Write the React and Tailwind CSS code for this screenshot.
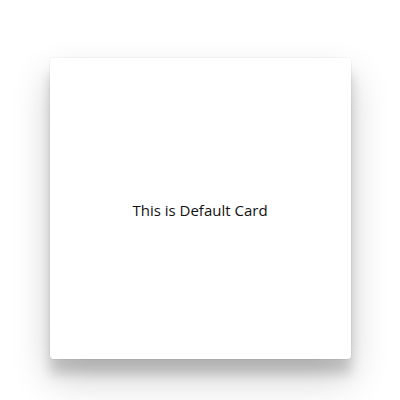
export default function App() {
  return (
    <div className="flex h-[400px] w-[400px] justify-center bg-white pt-[58px]" style={{ fontFamily: '"Open Sans", sans-serif' }}>
      <div className="flex h-[301px] w-[301px] items-center justify-center rounded-[4px] bg-white pt-[4px] shadow-[0_0_0_1px_rgba(0,0,0,0.03),0_19px_38px_rgba(0,0,0,0.20),0_15px_12px_rgba(0,0,0,0.16)]">
        <p className="text-[15px] text-[#111]">This is Default Card</p>
      </div>
    </div>
  )
}
